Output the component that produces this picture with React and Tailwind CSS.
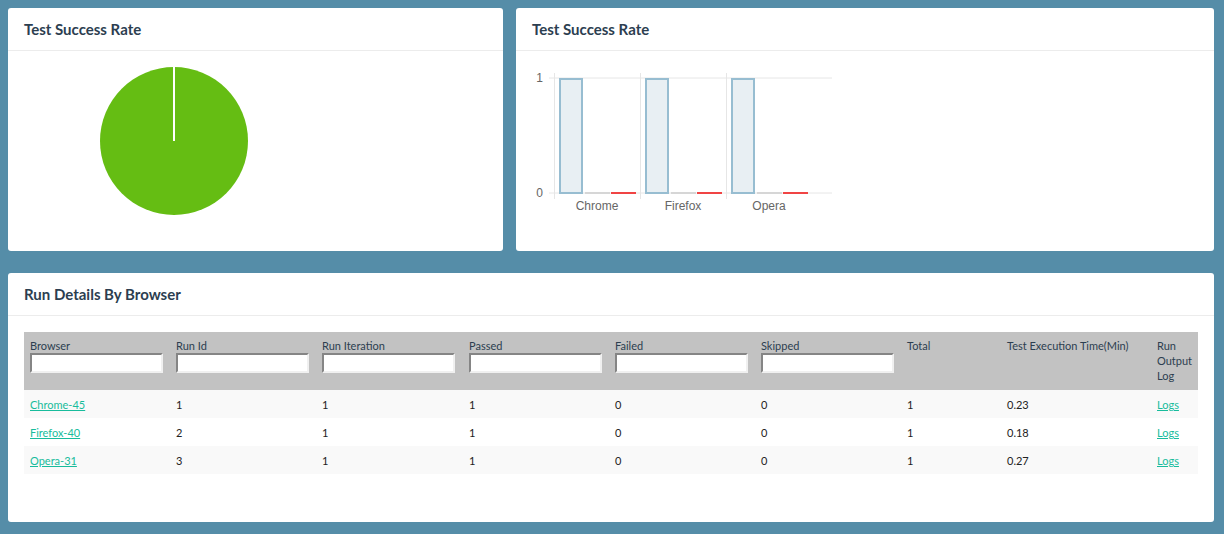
import React from "react";

const runs = [
  { browser: "Chrome-45", runId: 1, iteration: 1, passed: 1, failed: 0, skipped: 0, total: 1, time: "0.23" },
  { browser: "Firefox-40", runId: 2, iteration: 1, passed: 1, failed: 0, skipped: 0, total: 1, time: "0.18" },
  { browser: "Opera-31", runId: 3, iteration: 1, passed: 1, failed: 0, skipped: 0, total: 1, time: "0.27" },
];

const filterCols = ["Browser", "Run Id", "Run Iteration", "Passed", "Failed", "Skipped"];

function CardHeader({ title }) {
  return (
    <div className="h-[43px] border-b border-[#ececec] px-4 flex items-center">
      <h3 className="text-[15px] font-bold text-[#2c3e50] leading-none">{title}</h3>
    </div>
  );
}

function PieChart() {
  return (
    <svg width="340" height="190" className="block">
      <circle cx="166" cy="90" r="74" fill="#65bd13" />
      <line x1="166" y1="16" x2="166" y2="90" stroke="#fff" strokeWidth="2" />
    </svg>
  );
}

function BarChart() {
  const groups = ["Chrome", "Firefox", "Opera"];
  return (
    <svg width="340" height="180" className="block" style={{ fontFamily: "'Liberation Sans', Arial, sans-serif" }}>
      <line x1="33" y1="27" x2="316" y2="27" stroke="#e6e6e6" />
      <line x1="33" y1="142" x2="316" y2="142" stroke="#e6e6e6" />
      {[38, 124, 210].map((x) => (
        <line key={x} x1={x + 0.5} y1="22" x2={x + 0.5} y2="148" stroke="#e6e6e6" />
      ))}
      <text x="27" y="31" textAnchor="end" fontSize="12" fill="#666">1</text>
      <text x="27" y="146" textAnchor="end" fontSize="12" fill="#666">0</text>
      {groups.map((g, i) => {
        const ox = i * 86;
        return (
          <g key={g}>
            <rect x={44 + ox} y="28" width="22" height="114" fill="#e8eff3" stroke="#97bdd1" strokeWidth="2" />
            <rect x={69 + ox} y="141" width="25" height="2" fill="#d6d6d6" />
            <rect x={95 + ox} y="141" width="25" height="2" fill="#f04444" />
            <text x={81 + ox} y="159" textAnchor="middle" fontSize="12" fill="#666">{g}</text>
          </g>
        );
      })}
    </svg>
  );
}

export default function App() {
  return (
    <div className="min-h-[534px] bg-[#558da8] pt-2 pl-2 pr-[10px] flex flex-col gap-[22px] font-['Lato',sans-serif]">
      <div className="flex gap-[13px]">
        <div className="w-[495px] h-[243px] bg-white rounded-[3px]">
          <CardHeader title="Test Success Rate" />
          <PieChart />
        </div>
        <div className="flex-1 h-[243px] bg-white rounded-[3px]">
          <CardHeader title="Test Success Rate" />
          <BarChart />
        </div>
      </div>

      <div className="h-[249px] bg-white rounded-[3px]">
        <CardHeader title="Run Details By Browser" />
        <div className="px-4 pt-4">
          <table className="w-full table-fixed border-collapse text-[11px] text-[#2c3e50]">
            <colgroup>
              <col className="w-[146px]" />
              <col className="w-[146px]" />
              <col className="w-[147px]" />
              <col className="w-[146px]" />
              <col className="w-[146px]" />
              <col className="w-[146px]" />
              <col className="w-[100px]" />
              <col className="w-[150px]" />
              <col />
            </colgroup>
            <thead className="bg-[#c2c2c2]">
              <tr>
                {filterCols.map((c) => (
                  <th key={c} className="text-left font-normal align-top pl-1.5 pt-[6px] pb-[7px] leading-[15px]">
                    <div>{c}</div>
                    <input
                      type="text"
                      className="block w-[133px] h-[20px] bg-white border-2 border-t-[#858585] border-l-[#858585] border-b-[#f0f0f0] border-r-[#f0f0f0] outline-none"
                    />
                  </th>
                ))}
                <th className="text-left font-normal align-top pl-1.5 pt-[6px] pb-[7px] leading-[15px]">Total</th>
                <th className="text-left font-normal align-top pl-1.5 pt-[6px] pb-[7px] leading-[15px]">Test Execution Time(Min)</th>
                <th className="text-left font-normal align-top pl-1.5 pr-1 pt-[6px] pb-[7px] leading-[15px]">Run Output Log</th>
              </tr>
            </thead>
            <tbody className="text-[#222]">
              {runs.map((r, i) => (
                <tr key={r.browser} className={i % 2 === 0 ? "bg-[#f9f9f9]" : "bg-white"}>
                  <td className="pl-1.5 h-[28px] pt-[2px]">
                    <a href="#" className="text-[#18bc9c] underline">{r.browser}</a>
                  </td>
                  <td className="pl-1.5 pt-[2px]">{r.runId}</td>
                  <td className="pl-1.5 pt-[2px]">{r.iteration}</td>
                  <td className="pl-1.5 pt-[2px]">{r.passed}</td>
                  <td className="pl-1.5 pt-[2px]">{r.failed}</td>
                  <td className="pl-1.5 pt-[2px]">{r.skipped}</td>
                  <td className="pl-1.5 pt-[2px]">{r.total}</td>
                  <td className="pl-1.5 pt-[2px]">{r.time}</td>
                  <td className="pl-1.5 pt-[2px]">
                    <a href="#" className="text-[#18bc9c] underline">Logs</a>
                  </td>
                </tr>
              ))}
            </tbody>
          </table>
        </div>
      </div>
    </div>
  );
}
